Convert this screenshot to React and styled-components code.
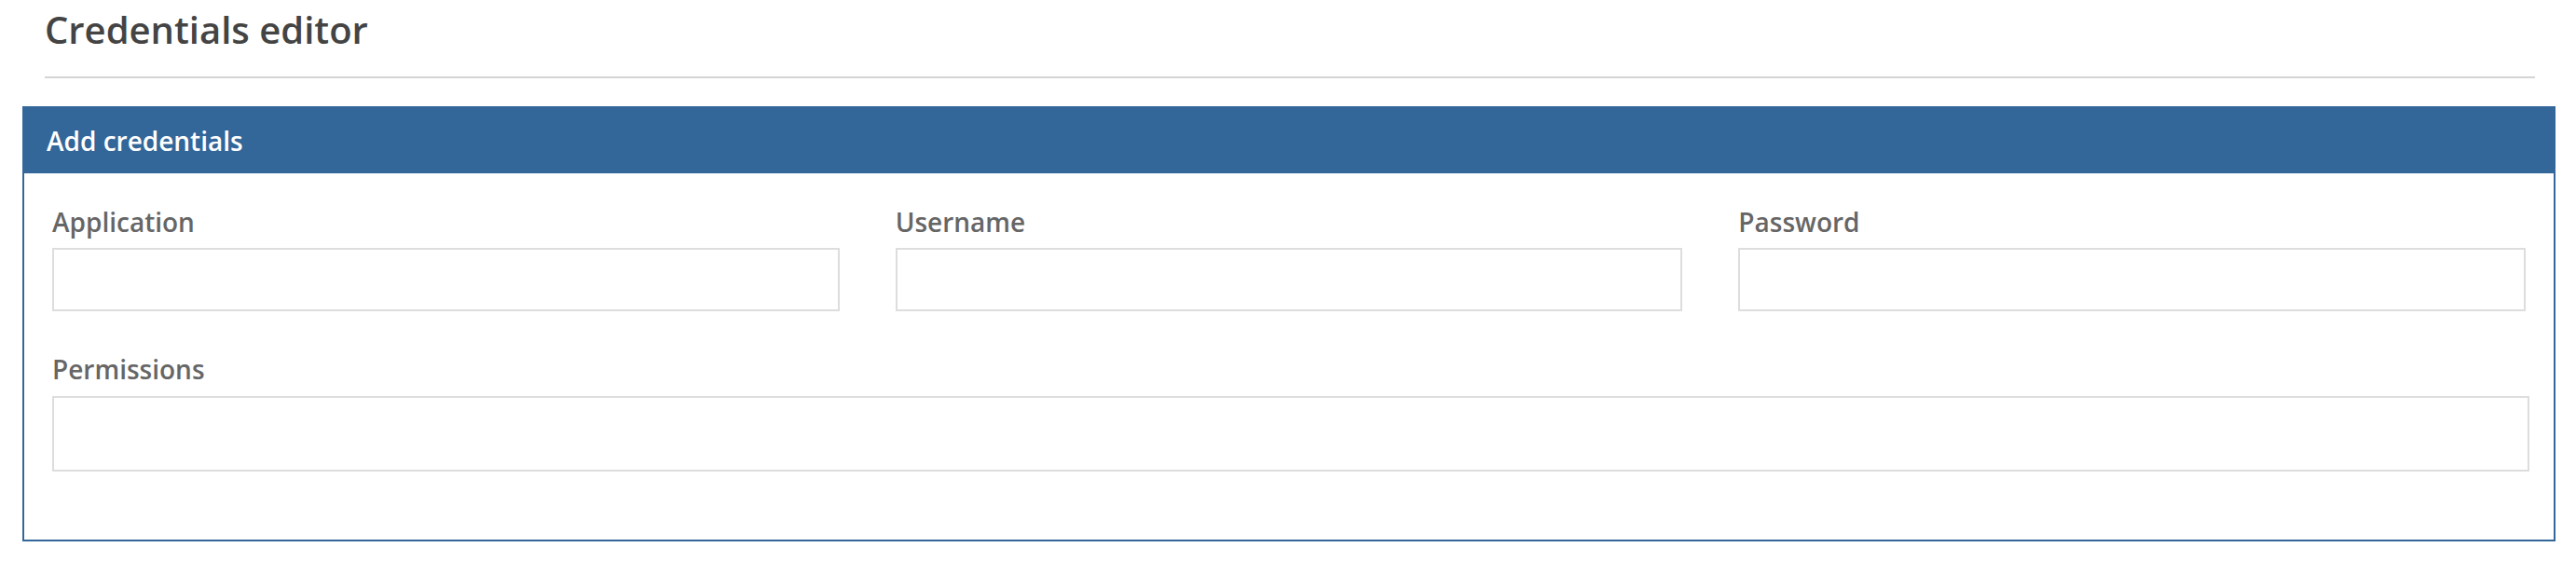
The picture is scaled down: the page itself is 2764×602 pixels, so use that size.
import React from "react";
import styled, { createGlobalStyle } from "styled-components";

const GlobalStyle = createGlobalStyle`
  html, body {
    margin: 0;
    padding: 0;
    background: #ffffff;
  }
  body {
    font-family: "Open Sans", "Noto Sans", "Liberation Sans", sans-serif;
  }
  * { box-sizing: border-box; }
`;

const Page = styled.div`
  padding: 4px 22px 0 24px;
  width: 2764px;
`;

const TitleBlock = styled.div`
  margin: 0 22px 0 24px;
  padding-bottom: 22px;
  border-bottom: 2px solid #d4d4d4;
`;

const Title = styled.h1`
  margin: 0;
  font-size: 40px;
  line-height: 56px;
  font-weight: 600;
  color: #444444;
`;

const Panel = styled.section`
  margin-top: 30px;
  border: 2px solid #336699;
  background: #ffffff;
`;

const PanelHeader = styled.div`
  background: #336699;
  color: #ffffff;
  padding: 15px 24px;
  font-size: 28px;
  line-height: 40px;
  font-weight: 600;
`;

const PanelBody = styled.div`
  padding: 32px 30px 73px 30px;
  display: flex;
  flex-direction: column;
  gap: 42px;
`;

const Row = styled.div`
  display: grid;
  grid-template-columns: ${(p) => (p.$cols === 1 ? "1fr" : "repeat(3, 1fr)")};
  column-gap: 60px;
  margin-right: ${(p) => (p.$cols === 1 ? "-4px" : "0")};
`;

const Field = styled.div`
  display: flex;
  flex-direction: column;
  gap: ${(p) => (p.$tall ? "9px" : "8px")};
`;

const Label = styled.label`
  font-size: 28px;
  line-height: 40px;
  font-weight: 600;
  color: #666666;
`;

const Input = styled.input`
  display: block;
  width: 100%;
  height: ${(p) => (p.$tall ? "81px" : "68px")};
  border: 2px solid #dddddd;
  border-radius: 0;
  background: #ffffff;
  padding: 0 16px;
  font-family: inherit;
  font-size: 28px;
  color: #444444;
  outline: none;
`;

export default function App() {
  return (
    <>
      <GlobalStyle />
      <Page>
        <TitleBlock>
          <Title>Credentials editor</Title>
        </TitleBlock>
        <Panel>
          <PanelHeader>Add credentials</PanelHeader>
          <PanelBody>
            <Row $cols={3}>
              <Field>
                <Label>Application</Label>
                <Input type="text" />
              </Field>
              <Field>
                <Label>Username</Label>
                <Input type="text" />
              </Field>
              <Field>
                <Label>Password</Label>
                <Input type="password" />
              </Field>
            </Row>
            <Row $cols={1}>
              <Field $tall>
                <Label>Permissions</Label>
                <Input type="text" $tall />
              </Field>
            </Row>
          </PanelBody>
        </Panel>
      </Page>
    </>
  );
}
